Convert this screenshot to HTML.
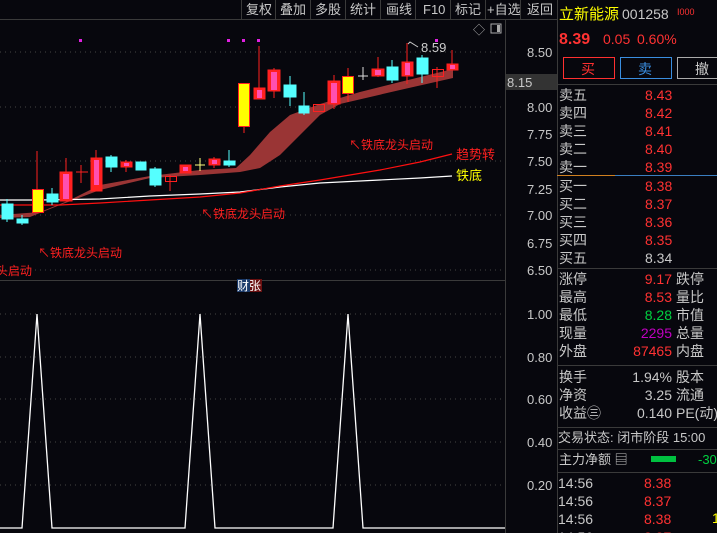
<!DOCTYPE html>
<html style="height:533px;overflow:hidden"><head><meta charset="utf-8"><style>
html,body{height:533px;overflow:hidden}
body{margin:0;width:717px;background:#07070d;font-family:"Liberation Sans","Noto Sans CJK SC",sans-serif;position:relative}
.t{position:absolute;font-size:13px;white-space:nowrap;line-height:16px}
.g{color:#c8c8c8}.r{color:#ff3232}.y{color:#ffff00}.gr{color:#00d040}.m{color:#c000c0}
</style></head><body>
<svg width="717" height="533" style="position:absolute;left:0;top:0" font-family="Liberation Sans, Noto Sans CJK SC, sans-serif">
<line x1="0" y1="19.5" x2="557" y2="19.5" stroke="#3a3a3a"/>
<g stroke="#3a3a3a"><line x1="241.5" y1="0" x2="241.5" y2="19"/><line x1="275.5" y1="0" x2="275.5" y2="19"/><line x1="310.5" y1="0" x2="310.5" y2="19"/><line x1="345.5" y1="0" x2="345.5" y2="19"/><line x1="380.5" y1="0" x2="380.5" y2="19"/><line x1="415.5" y1="0" x2="415.5" y2="19"/><line x1="450.5" y1="0" x2="450.5" y2="19"/><line x1="485.5" y1="0" x2="485.5" y2="19"/><line x1="520.5" y1="0" x2="520.5" y2="19"/></g>
<g fill="#c8c8c8" font-size="13"><text x="246" y="14">复权</text><text x="280" y="14">叠加</text><text x="315" y="14">多股</text><text x="350" y="14">统计</text><text x="386" y="14">画线</text><text x="423" y="14">F10</text><text x="455" y="14">标记</text><text x="487" y="14">+自选</text><text x="527" y="14">返回</text></g>
<g stroke="#444" stroke-dasharray="1,4"><line x1="0" y1="52" x2="505" y2="52"/><line x1="0" y1="107" x2="505" y2="107"/><line x1="0" y1="161" x2="505" y2="161"/><line x1="0" y1="215" x2="505" y2="215"/><line x1="0" y1="270" x2="505" y2="270"/>
<line x1="0" y1="314" x2="505" y2="314"/><line x1="0" y1="357" x2="505" y2="357"/><line x1="0" y1="399" x2="505" y2="399"/><line x1="0" y1="442" x2="505" y2="442"/><line x1="0" y1="485" x2="505" y2="485"/></g>
<line x1="505.5" y1="20" x2="505.5" y2="533" stroke="#3a3a3a"/>
<line x1="557.5" y1="0" x2="557.5" y2="533" stroke="#3a3a3a"/>
<line x1="0" y1="280.5" x2="505" y2="280.5" stroke="#3a3a3a"/>
<g fill="#c8c8c8" font-size="13"><text x="527" y="57">8.50</text><text x="527" y="112">8.00</text><text x="527" y="139">7.75</text><text x="527" y="166">7.50</text><text x="527" y="194">7.25</text><text x="527" y="220">7.00</text><text x="527" y="248">6.75</text><text x="527" y="275">6.50</text>
<text x="527" y="319">1.00</text><text x="527" y="362">0.80</text><text x="527" y="404">0.60</text><text x="527" y="447">0.40</text><text x="527" y="490">0.20</text></g>
<rect x="506" y="74" width="51" height="16" fill="#333"/><text x="507" y="87" fill="#c8c8c8" font-size="13">8.15</text>
<text x="473" y="34" fill="#aaa" font-size="12">◇</text><rect x="491" y="24" width="10" height="9" fill="none" stroke="#aaa"/><rect x="497" y="25" width="3" height="7" fill="#aaa"/>
<polygon fill="#9a3535" points="0,215 40,212 70,200 100,185 150,176 200,170 236,168 250,155 270,132 290,115 320,104 360,92 400,82 453,69 453,78 400,90 340,104 320,115 300,135 280,155 260,168 240,172 200,175 150,178 100,190 60,205 30,217 0,218"/>
<polyline fill="none" stroke="#fff" stroke-width="1.2" points="0,200 40,200 100,199 150,196 200,194 240,192 280,187 320,183 380,180 420,178 452,176"/>
<polyline fill="none" stroke="#ff1010" stroke-width="1.2" points="0,205 60,205 100,203 150,200 200,197 240,193 280,186 320,180 380,170 420,162 452,154"/>
<g stroke-width="1">
<g stroke="#5ff" fill="#5ff"><line x1="7" y1="199" x2="7" y2="222"/><rect x="2" y="204" width="11" height="15"/><line x1="22" y1="215" x2="22" y2="225"/><rect x="17" y="219" width="11" height="4"/><line x1="52" y1="188" x2="52" y2="205"/><rect x="47" y="194" width="11" height="8"/><rect x="106" y="157" width="11" height="10"/><line x1="111" y1="155" x2="111" y2="172"/><rect x="136" y="162" width="10" height="8"/><line x1="155" y1="167" x2="155" y2="187"/><rect x="150" y="169" width="11" height="16"/><line x1="229" y1="150" x2="229" y2="167"/><rect x="224" y="161" width="11" height="4"/><line x1="290" y1="76" x2="290" y2="106"/><rect x="284" y="85" width="12" height="12"/><line x1="304" y1="92" x2="304" y2="115"/><rect x="299" y="106" width="10" height="7"/><line x1="392" y1="60" x2="392" y2="83"/><rect x="387" y="67" width="11" height="13"/><line x1="422" y1="55" x2="422" y2="83"/><rect x="417" y="58" width="11" height="16"/></g>
<g stroke="#ff2020" fill="#ff2020"><line x1="37" y1="151" x2="37" y2="189"/><line x1="66" y1="158" x2="66" y2="172"/><rect x="60" y="172" width="12" height="29"/><line x1="81" y1="165" x2="81" y2="183"/><line x1="76" y1="172" x2="88" y2="172"/><line x1="96" y1="150" x2="96" y2="158"/><rect x="91" y="158" width="11" height="33"/><rect x="121" y="162" width="11" height="5"/><line x1="126" y1="160" x2="126" y2="172"/><line x1="170" y1="175" x2="170" y2="191"/><rect x="180" y="165" width="11" height="8"/><line x1="214" y1="157" x2="214" y2="168"/><rect x="209" y="159" width="11" height="6"/><line x1="244" y1="126" x2="244" y2="133"/><line x1="259" y1="46" x2="259" y2="99"/><rect x="254" y="88" width="11" height="11"/><line x1="274" y1="68" x2="274" y2="98"/><rect x="268" y="70" width="12" height="21"/><line x1="334" y1="75" x2="334" y2="109"/><rect x="328" y="81" width="12" height="23"/><line x1="348" y1="68" x2="348" y2="102"/><line x1="378" y1="57" x2="378" y2="77"/><rect x="372" y="69" width="12" height="7"/><line x1="407" y1="43" x2="407" y2="84"/><rect x="402" y="62" width="11" height="14"/><line x1="437" y1="67" x2="437" y2="88"/><line x1="452" y1="50" x2="452" y2="64"/><rect x="447" y="64" width="11" height="6"/></g>
<g fill="none" stroke="#ff2020"><rect x="165.5" y="176.5" width="11" height="5"/><rect x="313.5" y="104.5" width="11" height="7"/><rect x="432.5" y="69.5" width="11" height="7"/></g>
<g fill="#ff50b0"><rect x="63" y="174" width="6" height="25"/><rect x="94" y="160" width="5" height="25"/><rect x="124" y="163" width="5" height="3"/><rect x="183" y="167" width="5" height="4"/><rect x="212" y="160" width="5" height="4"/><rect x="257" y="90" width="5" height="8"/><rect x="271" y="72" width="6" height="18"/><rect x="331" y="83" width="6" height="20"/><rect x="375" y="70" width="6" height="5"/><rect x="405" y="63" width="5" height="12"/><rect x="450" y="65" width="5" height="4"/></g>
<g fill="#ff0" stroke="#ff2020"><rect x="32.5" y="189.5" width="11" height="23"/><rect x="238.5" y="83.5" width="11" height="43"/><rect x="342.5" y="76.5" width="11" height="17"/></g>
<g stroke="#ffff80"><line x1="200" y1="158" x2="200" y2="171"/><line x1="195" y1="165" x2="205" y2="165"/></g>
<g stroke="#ddd"><line x1="363" y1="67" x2="363" y2="80"/><line x1="358" y1="76" x2="368" y2="76"/></g>
</g>
<g fill="#e020e0"><rect x="79" y="39" width="3" height="3"/><rect x="227" y="39" width="3" height="3"/><rect x="242" y="39" width="3" height="3"/><rect x="257" y="39" width="3" height="3"/><rect x="435" y="39" width="3" height="3"/></g>
<polyline points="408,44 410,42 418,47" fill="none" stroke="#ccc"/><text x="421" y="52" fill="#ccc" font-size="13">8.59</text>
<g fill="#ff2020" font-size="12"><text x="38" y="257">↖铁底龙头启动</text><text x="201" y="218">↖铁底龙头启动</text><text x="349" y="149">↖铁底龙头启动</text><text x="-4" y="275">头启动</text><text x="456" y="159" font-size="13">趋势转</text></g>
<text x="456" y="180" fill="#ff0" font-size="13">铁底</text>
<rect x="237" y="279" width="13" height="13" fill="#1a3a6a"/><rect x="250" y="279" width="12" height="13" fill="#6a1010"/><text x="237" y="290" fill="#fff" font-size="12">财张</text>
<polyline fill="none" stroke="#fff" stroke-width="1.3" points="0,528 22,528 37,314 52,528 185,528 200,314 215,528 333,528 348,314 363,528 505,528"/>
<text x="559" y="19" fill="#ff0" font-size="15">立新能源</text><text x="622" y="19" fill="#c8c8c8" font-size="14">001258</text><text x="677" y="15" fill="#ff3232" font-size="9">I000</text>
<text x="559" y="44" fill="#ff3232" font-size="16" font-weight="bold">8.39</text><text x="603" y="44" fill="#ff3232" font-size="14">0.05</text><text x="637" y="44" fill="#ff3232" font-size="14">0.60%</text>
<rect x="563.5" y="57.5" width="51" height="21" fill="none" stroke="#ff3030"/><text x="581" y="74" fill="#ff3030" font-size="14">买</text>
<rect x="620.5" y="57.5" width="51" height="21" fill="none" stroke="#3a8ee0"/><text x="638" y="74" fill="#3a8ee0" font-size="14">卖</text>
<rect x="677.5" y="57.5" width="45" height="21" fill="none" stroke="#aaa"/><text x="695" y="74" fill="#ccc" font-size="14">撤</text>
<line x1="557" y1="84.5" x2="717" y2="84.5" stroke="#3a3a3a"/>
<line x1="557" y1="175.5" x2="615" y2="175.5" stroke="#d08020"/><line x1="615" y1="175.5" x2="717" y2="175.5" stroke="#3a7ec0"/>
<g stroke="#3a3a3a"><line x1="557" y1="268.5" x2="717" y2="268.5"/><line x1="557" y1="365.5" x2="717" y2="365.5"/><line x1="557" y1="427.5" x2="717" y2="427.5"/><line x1="557" y1="449.5" x2="717" y2="449.5"/><line x1="557" y1="472.5" x2="717" y2="472.5"/></g>
<rect x="651" y="456" width="25" height="6" fill="#00c040"/>
</svg>
<div class="t g" style="left:559px;top:86px;line-height:18px;font-size:14px">卖五<br>卖四<br>卖三<br>卖二<br>卖一</div>
<div class="t r" style="left:645px;top:86px;line-height:18px;font-size:14px">8.43<br>8.42<br>8.41<br>8.40<br>8.39</div>
<div class="t g" style="left:559px;top:177px;line-height:18px;font-size:14px">买一<br>买二<br>买三<br>买四<br>买五</div>
<div class="t r" style="left:645px;top:177px;line-height:18px;font-size:14px">8.38<br>8.37<br>8.36<br>8.35<br><span class="g">8.34</span></div>
<div class="t g" style="left:559px;top:270px;line-height:18px;font-size:14px">涨停<br>最高<br>最低<br>现量<br>外盘</div>
<div class="t" style="right:45px;top:270px;line-height:18px;font-size:14px;text-align:right"><span class="r">9.17</span><br><span class="r">8.53</span><br><span class="gr">8.28</span><br><span class="m">2295</span><br><span class="r">87465</span></div>
<div class="t g" style="left:676px;top:270px;line-height:18px;font-size:14px">跌停<br>量比<br>市值<br>总量<br>内盘</div>
<div class="t g" style="left:559px;top:368px;line-height:18px;font-size:14px">换手<br>净资<br>收益㊂</div>
<div class="t g" style="right:45px;top:368px;line-height:18px;font-size:14px;text-align:right">1.94%<br>3.25<br>0.140</div>
<div class="t g" style="left:676px;top:368px;line-height:18px;font-size:14px">股本<br>流通<br>PE(动)</div>
<div class="t g" style="left:558px;top:430px;font-size:13px">交易状态: 闭市阶段 15:00</div>
<div class="t g" style="left:559px;top:452px;font-size:13px">主力净额 ▤</div>
<div class="t gr" style="left:698px;top:452px;font-size:13px">-30</div>
<div class="t g" style="left:558px;top:474px;line-height:18px;font-size:14px;height:59px;overflow:hidden">14:56<br>14:56<br>14:56<br>14:56</div>
<div class="t r" style="left:644px;top:474px;line-height:18px;font-size:14px;height:59px;overflow:hidden">8.38<br>8.37<br>8.38<br>8.37</div>
<div class="t y" style="left:712px;top:510px;font-size:14px">1</div>
</body></html>
